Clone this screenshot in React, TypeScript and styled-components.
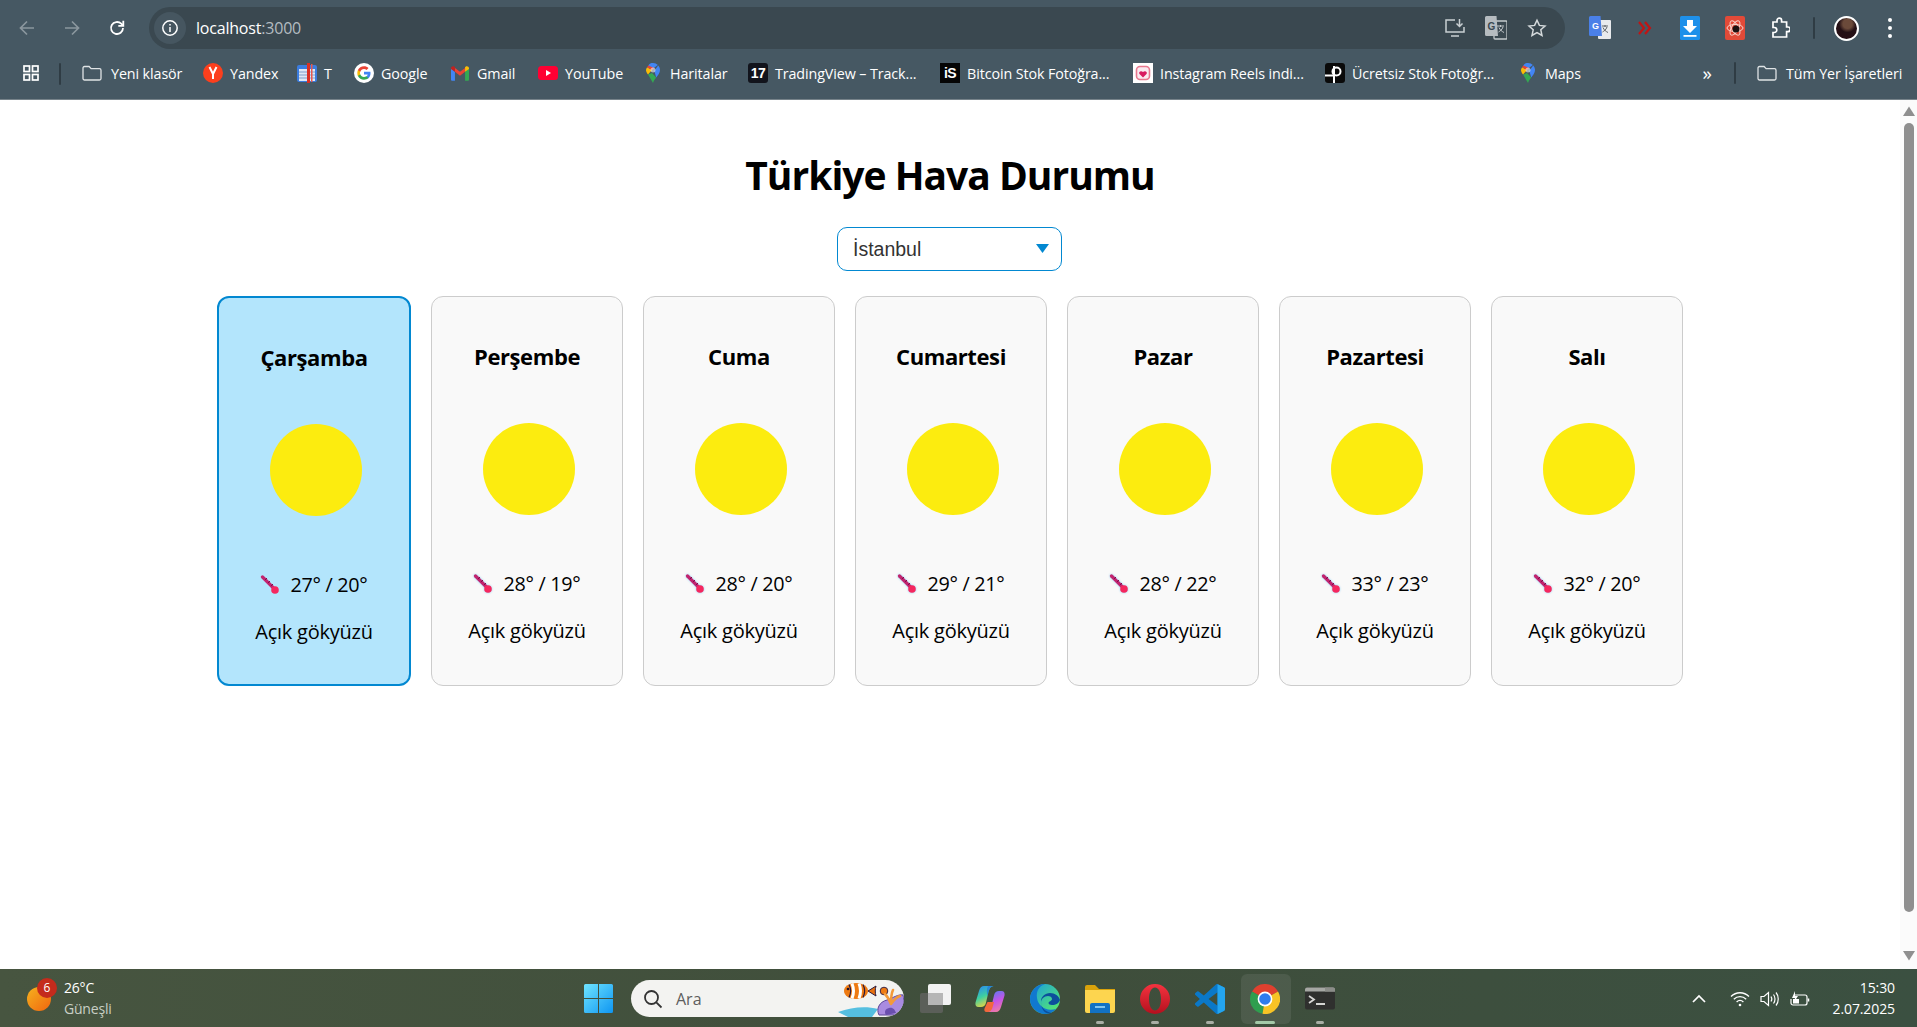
import React from "react";
import styled, { createGlobalStyle } from "styled-components";

const Global = createGlobalStyle`
  html, body { margin: 0; padding: 0; height: 100%; overflow: hidden; }
  * { box-sizing: border-box; }
  body { font-family: "Open Sans", "Noto Sans", sans-serif; background: #fff; }
  svg { flex: none; }
`;

const Screen = styled.div`
  height: 100vh;
  display: flex;
  flex-direction: column;
`;

/* ---------- browser chrome ---------- */
const BrowserChrome = styled.header`
  height: 100px;
  flex: none;
  background: #465863;
  border-bottom: 1px solid #77838a;
  color: #fff;
`;
const Toolbar = styled.div`
  height: 56px;
  padding: 7px 5px 0 4px;
  display: flex;
  align-items: flex-start;
`;
const NavButton = styled.div<{ $w?: number }>`
  width: ${(p) => p.$w ?? 45}px;
  height: 42px;
  flex: none;
  display: flex;
  align-items: center;
  justify-content: center;
`;
const Omnibox = styled.div`
  flex: 1;
  height: 42px;
  margin: 0 12px 0 10px;
  background: #3a4850;
  border-radius: 21px;
  display: flex;
  align-items: center;
  padding: 0 8px 0 5px;
`;
const InfoChip = styled.div`
  width: 32px;
  height: 32px;
  border-radius: 50%;
  background: #465660;
  display: flex;
  align-items: center;
  justify-content: center;
`;
const Url = styled.div`
  margin-left: 10px;
  font-size: 16px;
  letter-spacing: -0.2px;
  color: #fff;
  flex: 1;
  span { color: #b4bcc1; }
`;
const OmniAction = styled.div`
  width: 41px;
  height: 32px;
  display: flex;
  align-items: center;
  justify-content: center;
`;
const Divider = styled.div<{ $ml: number; $mr?: number; $mt?: number }>`
  width: 2px;
  height: 22px;
  flex: none;
  margin: ${(p) => p.$mt ?? 0}px ${(p) => p.$mr ?? 0}px 0 ${(p) => p.$ml}px;
  background: #2f3c44;
  border-radius: 1px;
`;
const AvatarRing = styled.div`
  width: 25px;
  height: 25px;
  border-radius: 50%;
  border: 2px solid #fff;
  background: radial-gradient(circle at 55% 28%, #6b4a3a 0 24%, #241015 45%, #2a0d14 100%);
`;
const BookmarkBar = styled.nav`
  height: 43px;
  display: flex;
  align-items: flex-start;
  padding: 7px 16px 0 23px;
`;
const BarSlot = styled.div`
  height: 20px;
  display: flex;
  align-items: center;
`;
const BookmarkItem = styled.div<{ $first?: boolean }>`
  height: 20px;
  display: flex;
  align-items: center;
  gap: 9px;
  margin-left: ${(p) => (p.$first ? 21 : 23)}px;
  flex: none;
`;
const BookmarkIcon = styled.div<{ $w?: number }>`
  width: ${(p) => p.$w ?? 16}px;
  height: 16px;
  display: flex;
  align-items: center;
  justify-content: center;
  flex: none;
`;
const BookmarkLabel = styled.span<{ $w: number }>`
  width: ${(p) => p.$w}px;
  white-space: nowrap;
  font-size: 14.3px;
  letter-spacing: -0.1px;
  color: #fff;
`;
const BadgeSquare = styled.div<{ $bg: string; $r: number }>`
  width: 20px;
  height: 20px;
  flex: none;
  background: ${(p) => p.$bg};
  border-radius: ${(p) => p.$r}px;
  color: #fff;
  font-family: "Liberation Sans", sans-serif;
  font-weight: 700;
  font-size: 14px;
  line-height: 20px;
  text-align: center;
  letter-spacing: -0.5px;
`;
const BarEnd = styled.div`
  margin-left: auto;
  display: flex;
  align-items: center;
  height: 20px;
`;
const Chevrons = styled.span`
  font-size: 19px;
  line-height: 20px;
  color: #fff;
  margin-right: 22px;
`;
const AllBookmarks = styled.div`
  margin-left: 21px;
  display: flex;
  align-items: center;
  gap: 9px;
`;

/* ---------- page ---------- */
const Viewport = styled.div`
  flex: 1;
  min-height: 0;
  display: flex;
`;
const Page = styled.main`
  flex: 1;
  padding-top: 50px;
  display: flex;
  flex-direction: column;
  align-items: center;
`;
const Title = styled.h1`
  margin: 0;
  font-size: 39px;
  line-height: 50px;
  font-weight: 700;
  color: #000;
  letter-spacing: -1px;
`;
const SelectWrap = styled.div`
  position: relative;
  width: 225px;
  height: 44px;
  margin: 27px 1px 0 0;
`;
const CitySelect = styled.select`
  appearance: none;
  width: 100%;
  height: 100%;
  border: 1px solid #0288d1;
  border-radius: 10px;
  background: #fff;
  padding: 0 15px;
  font-family: "Liberation Sans", Arial, sans-serif;
  font-size: 19.5px;
  color: #333;
  outline: none;
`;
const SelectArrow = styled.svg`
  position: absolute;
  right: 13px;
  top: 17px;
  width: 13px;
  height: 9px;
`;
const Cards = styled.section`
  margin-top: 25px;
  display: flex;
  align-items: flex-start;
  gap: 20px;
`;
const Card = styled.article<{ $active?: boolean }>`
  width: ${(p) => (p.$active ? 194 : 192)}px;
  height: 390px;
  border-radius: 12px;
  border: ${(p) => (p.$active ? "2px solid #0288d1" : "1px solid #ccc")};
  background: ${(p) => (p.$active ? "#b3e5fc" : "#f9f9f9")};
  padding-top: 43px;
  display: flex;
  flex-direction: column;
  align-items: center;
  color: #000;
`;
const DayName = styled.h3`
  margin: 0;
  font-size: 22px;
  line-height: 32px;
  font-weight: 700;
  letter-spacing: -0.4px;
`;
const Sun = styled.div`
  width: 92px;
  height: 92px;
  margin: 51px 0 0 4px;
  border-radius: 50%;
  background: #fcec0f;
`;
const TempRow = styled.div`
  margin-top: 56px;
  display: flex;
  align-items: center;
  gap: 10px;
  font-size: 19.8px;
  line-height: 26px;
  letter-spacing: -0.3px;
`;
const Thermo = styled.svg<{ $halo?: boolean }>`
  width: 20px;
  height: 20px;
  flex: none;
  filter: ${(p) => (p.$halo ? "drop-shadow(0 0 1px #8fd0f5)" : "none")};
`;
const Description = styled.p`
  margin: 21px 0 0;
  font-size: 20px;
  line-height: 26px;
  letter-spacing: -0.25px;
`;
const Scrollbar = styled.div`
  width: 17px;
  flex: none;
  background: #fbfbfb;
  display: flex;
  flex-direction: column;
  align-items: center;
  padding: 6px 0 8px;
`;
const ScrollThumb = styled.div`
  width: 10px;
  flex: 1;
  margin: 7px 0 39px;
  background: #8f8f8f;
  border-radius: 5px;
`;
const ScrollArrow = styled.svg`
  width: 12px;
  height: 10px;
  flex: none;
`;

/* ---------- taskbar ---------- */
const Taskbar = styled.footer`
  height: 58px;
  flex: none;
  padding-top: 1px;
  background: linear-gradient(90deg, #475540 0%, #3f4e3b 55%, #3b5041 100%);
  display: grid;
  grid-template-columns: 573px auto 1fr;
  align-items: center;
`;
const WeatherWidget = styled.div`
  display: flex;
  align-items: center;
  padding-left: 27px;
`;
const WeatherIcon = styled.div`
  position: relative;
  width: 24px;
  height: 24px;
  border-radius: 50%;
  background: linear-gradient(135deg, #f6b21e, #f0650f);
`;
const CountBadge = styled.span`
  position: absolute;
  top: -9px;
  left: 10px;
  width: 20px;
  height: 20px;
  border-radius: 50%;
  background: #c42b1c;
  color: #fff;
  font-size: 12px;
  line-height: 20px;
  text-align: center;
`;
const WeatherText = styled.div`
  margin-left: 13px;
  font-size: 14px;
  line-height: 20.5px;
  letter-spacing: -0.2px;
  color: #fff;
  small { display: block; font-size: 14px; color: #c9cfc5; }
`;
const CenterGroup = styled.div`
  display: flex;
  align-items: center;
`;
const SearchBox = styled.div`
  width: 273px;
  height: 37px;
  margin: 0 3.5px 0 8px;
  border-radius: 19px;
  background: #f3f3f1;
  display: flex;
  align-items: center;
  padding-left: 12px;
  overflow: hidden;
  color: #5e5e5e;
  font-size: 16px;
  span { margin-left: 13px; flex: 1; }
`;
const TaskButton = styled.div<{ $w?: number; $active?: boolean }>`
  position: relative;
  width: ${(p) => p.$w ?? 55}px;
  height: 50px;
  display: flex;
  align-items: center;
  justify-content: center;
  &::before {
    content: "";
    display: ${(p) => (p.$active ? "block" : "none")};
    position: absolute;
    inset: 0 2px 0 3px;
    border-radius: 6px;
    background: rgba(255, 255, 255, 0.08);
  }
  svg { position: relative; }
`;
const RunDot = styled.i<{ $active?: boolean }>`
  position: absolute;
  bottom: 0;
  left: 50%;
  transform: translateX(-50%);
  width: ${(p) => (p.$active ? 20 : 8)}px;
  height: 3px;
  border-radius: 2px;
  background: ${(p) => (p.$active ? "#a4c9a8" : "#a9aea5")};
`;
const Tray = styled.div`
  display: flex;
  align-items: center;
  justify-content: flex-end;
  padding-right: 22px;
  color: #fff;
`;
const TrayIcon = styled.div`
  width: 30px;
  height: 24px;
  display: flex;
  align-items: center;
  justify-content: center;
`;
const TrayGap = styled.div`
  width: 11px;
`;
const Clock = styled.div`
  margin-left: 18px;
  text-align: right;
  font-size: 14px;
  line-height: 20.5px;
  letter-spacing: -0.1px;
`;

/* ---------- icons ---------- */
const FolderIcon = () => (
  <svg width="20" height="16" viewBox="0 0 20 16" fill="none" stroke="#dfe3e5" strokeWidth="1.3">
    <path d="M1 3a1.5 1.5 0 0 1 1.5-1.5h4.6l2 2.2h8.4A1.5 1.5 0 0 1 19 5.200v8.300a1.500 1.500 0 0 1-1.500 1.500h-15A1.500 1.500 0 0 1 1 13.500z" />
  </svg>
);
const GoogleIcon = () => (
  <svg width="20" height="20" viewBox="0 0 48 48">
    <circle cx="24" cy="24" r="24" fill="#fff" />
    <path fill="#4285F4" d="M39.600 24.400c0-1.200-.1-2.300-.3-3.400H24v6.400h8.800c-.4 2-1.500 3.800-3.300 5v4.100h5.300c3.100-2.900 4.800-7.100 4.800-12.100z" />
    <path fill="#34A853" d="M24 40c4.400 0 8.100-1.500 10.800-3.900l-5.300-4.100c-1.500 1-3.300 1.600-5.500 1.600-4.200 0-7.800-2.900-9.100-6.700H9.400v4.200C12 36.400 17.600 40 24 40z" />
    <path fill="#FBBC05" d="M14.900 26.900c-.3-1-.5-2-.5-3s.2-2.100.5-3v-4.200H9.400C8.500 18.800 8 21.300 8 24s.5 5.200 1.400 7.100z" />
    <path fill="#EA4335" d="M24 14.300c2.400 0 4.500.8 6.200 2.400l4.600-4.600C32 9.500 28.400 8 24 8 17.600 8 12 11.600 9.400 16.900l5.500 4.200c1.300-3.900 4.900-6.800 9.100-6.800z" />
  </svg>
);
const GmailIcon = () => (
  <svg width="18" height="15" viewBox="0 0 16 13">
    <path fill="#4285F4" d="M0 2v10a1 1 0 0 0 1 1h2.500V5z" />
    <path fill="#34A853" d="M16 2v10a1 1 0 0 1-1 1h-2.500V5z" />
    <path fill="#EA4335" d="M3.500 5V1.500L8 5l4.500-3.500V5L8 8.400z" />
    <path fill="#C5221F" d="M0 2c0-1.600 1.800-2.500 3-1.600l.5.400V5L0 2.500z" />
    <path fill="#FBBC05" d="M16 2c0-1.600-1.800-2.500-3-1.600l-.5.400V5L16 2.500z" />
  </svg>
);
const MapsPin = () => (
  <svg width="14" height="24" viewBox="0 0 14 20">
    <path fill="#34A853" d="M2 11.500 7 20c.6-2 2-4 3.200-5.500L6 10z" />
    <path fill="#FBBC05" d="M1.100 4.200C.4 5.200 0 6 0 7.100c0 1.800.9 3 2 4.400L6 7z" />
    <path fill="#4285F4" d="M7 0C5 0 3.500.6 2.300 2.500L6 6.500 11.800 2C10.500.7 9 0 7 0z" />
    <path fill="#EA4335" d="M2.300 2.500 1.100 4.200 6 7 8 5z" />
    <path fill="#4285F4" d="M12.200 2.500 8.300 7.800 10.200 14.500C12 12 14 10 14 7c0-1.800-.7-3.300-1.800-4.500z" />
    <circle cx="7" cy="7" r="2.500" fill="#fff" opacity=".55" />
  </svg>
);
const SheetIcon = () => (
  <svg width="20" height="20" viewBox="0 0 20 20">
    <rect x="0" y="2" width="20" height="17" rx="2" fill="#3b7de0" />
    <rect x="2" y="6" width="16" height="12" fill="#dfe8f5" />
    <path d="M2 9h16M2 12h16M2 15h16" stroke="#7f9ecb" strokeWidth="1" />
    <rect x="10" y="0" width="3" height="20" fill="#d93025" />
    <rect x="14" y="1" width="1.500" height="18" fill="#e8584d" />
  </svg>
);
const InstaIcon = () => (
  <svg width="20" height="20" viewBox="0 0 20 20">
    <rect width="20" height="20" fill="#fff" />
    <rect x="3.500" y="3.500" width="13" height="13" rx="3.500" fill="#fbeaf0" stroke="#e9788f" strokeWidth="1.600" />
    <path d="M10 14.500 6.500 11c-1.500-2 1.500-4 3.500-2 2-2 5 0 3.500 2z" fill="#d81b60" />
  </svg>
);
const PexelsIcon = () => (
  <svg width="20" height="20" viewBox="0 0 20 20">
    <rect width="20" height="20" rx="3" fill="#0a0a0a" />
    <circle cx="11.500" cy="8.500" r="4" fill="none" stroke="#fff" strokeWidth="2" />
    <path d="M9 3v17M0 12.500h9" stroke="#fff" strokeWidth="2" />
  </svg>
);
const TranslateExt = () => (
  <svg width="22" height="26" viewBox="0 0 22 26">
    <rect x="9" y="5" width="13" height="19" rx="1" fill="#e8eaed" />
    <path d="M13 11h6M16 10v2M18 12c-1 3-3 4-4.500 5M14 12.500c1 2.500 3 4 5 5" stroke="#5f6368" strokeWidth="1" fill="none" />
    <path d="M1.500 1h10L13 21H1.500A1.500 1.500 0 0 1 0 19.500v-17A1.500 1.500 0 0 1 1.500 1z" fill="#4a80e8" />
    <text x="6.500" y="14" textAnchor="middle" fontFamily="Liberation Sans" fontWeight="700" fontSize="9" fill="#fff">G</text>
  </svg>
);
const OmniTranslate = () => (
  <svg width="22" height="26" viewBox="0 0 22 26">
    <rect x="9" y="6" width="13" height="18" rx="1" fill="none" stroke="#c4cacd" strokeWidth="1.300" />
    <path d="M12 11h7M15.500 10v2M18 12c-1 3-3 4-4.500 5M14 12.500c1 2.500 3 4 5 5" stroke="#c4cacd" strokeWidth="1" fill="none" />
    <path d="M1.500 1h10L13 21H1.500A1.500 1.500 0 0 1 0 19.500v-17A1.500 1.500 0 0 1 1.500 1z" fill="#b6bcc0" />
    <text x="6.500" y="14.500" textAnchor="middle" fontFamily="Liberation Sans" fontWeight="700" fontSize="10" fill="#3a4850">G</text>
  </svg>
);
const FishArt = () => (
  <svg width="66" height="37" viewBox="0 0 66 37">
    <path d="M0 32c14-5 28-6 40-3l-6 8H10z" fill="#55bfe0" />
    <ellipse cx="18" cy="11" rx="12" ry="8" fill="#ee7a12" />
    <path d="M14 3.500c2 5 2 10 0 15M21 3.500c2 5 2 10 0 15" stroke="#fff" strokeWidth="3" fill="none" />
    <path d="M11 4.500c2 4 2 9 0 13M25 4.500c2 4 2 9 0 13" stroke="#2b1a3d" strokeWidth="1.200" fill="none" />
    <path d="M30 11l8-5c-1 3-1 7 0 10z" fill="#e8700e" stroke="#2b1a3d" strokeWidth="1" />
    <circle cx="10" cy="9" r="1.300" fill="#1b1030" />
    <circle cx="46" cy="11" r="3.800" fill="#ee7a12" stroke="#3a2748" strokeWidth="1" />
    <path d="M41 35c-3-6 0-13 8-15 6-2 11-6 16-5 2 7 0 15-5 20z" fill="#a98be0" stroke="#5b4596" strokeWidth="1" />
    <path d="M48 35c-2-3-1-6 3-7s6 2 7 5z" fill="#6a4fae" />
    <path d="M53 24c-2-5-4-8-6-10M53 24c0-6 0-10 2-14M53 24c3-4 5-7 9-8" stroke="#f39a3a" strokeWidth="2.600" fill="none" strokeLinecap="round" />
  </svg>
);
const CopilotIcon = () => (
  <svg width="30" height="28" viewBox="0 0 30 28">
    <defs>
      <linearGradient id="cpA" x1="0.2" y1="0" x2="0.6" y2="1">
        <stop offset="0" stopColor="#2a8cf0" />
        <stop offset=".5" stopColor="#3ed0a0" />
        <stop offset="1" stopColor="#f8d63a" />
      </linearGradient>
      <linearGradient id="cpB" x1="0.3" y1="0" x2="0.7" y2="1">
        <stop offset="0" stopColor="#5a7af0" />
        <stop offset=".5" stopColor="#c455e6" />
        <stop offset="1" stopColor="#f37ea0" />
      </linearGradient>
    </defs>
    <path fill="url(#cpA)" d="M9 1h9.500c-3 .6-4.300 3-5 6l-2.600 11c-.6 2.500-2.400 4-4.900 4H3.500C1 22 0 20 .5 17.500L4 6C5 2.800 6.500 1 9 1z" />
    <path fill="url(#cpB)" d="M21 27h-9.500c3-.6 4.300-3 5-6l2.600-11C19.700 7.500 21.500 6 24 6h2.500c2.500 0 3.500 2 3 4.500L26 22c-1 3.200-2.500 5-5 5z" />
    <path fill="#f2683c" d="M12.500 17h6.500l-1.500 5.500c-.6 2.700-2.500 4.500-5 4.500h-1c-2 0-2.500-1.600-2-3.500z" />
    <path fill="#1f6fe0" d="M13 1h5.500c-3 .6-4.300 3-5 6l-1 4c-1-3.500-1-7 .5-10z" opacity=".65" />
  </svg>
);
const EdgeIcon = () => (
  <svg width="30" height="30" viewBox="0 0 30 30">
    <defs>
      <linearGradient id="edA" x1="0.2" y1="0" x2="0.9" y2="0.7">
        <stop offset="0" stopColor="#1fa3d6" />
        <stop offset="1" stopColor="#4fe07a" />
      </linearGradient>
    </defs>
    <circle cx="15" cy="15" r="15" fill="url(#edA)" />
    <path fill="#1178cf" d="M0 15C0 7 7 0 15 0 9 2 6 7 7 14c1 8 9 14 19 11a15 15 0 0 1-11 5C7 30 0 23 0 15z" />
    <path fill="#0c4f9c" d="M11 17c0-4 4-8 9-8 5 0 9 3 10 7-1 3-4 5-8 5-2 0-3.500-1-3.500-2 0-1.500 3.500-2 3.500-4s-2-3-4-3c-4 0-7 3-7 7 0 5 5 9 11 10-7 2-11-3-11-12z" />
  </svg>
);
const OperaIcon = () => (
  <svg width="30" height="30" viewBox="0 0 30 30">
    <defs>
      <linearGradient id="opA" x1="0" y1="0" x2="0" y2="1">
        <stop offset="0" stopColor="#f5333f" />
        <stop offset="1" stopColor="#b4101e" />
      </linearGradient>
    </defs>
    <path fill="url(#opA)" fillRule="evenodd" d="M15 0a15 15 0 1 1 0 30 15 15 0 0 1 0-30zm0 3.500c-3.800 0-6 5-6 11.500s2.200 11.500 6 11.500 6-5 6-11.500-2.200-11.500-6-11.500z" />
  </svg>
);
const VsCodeIcon = () => (
  <svg width="30" height="30" viewBox="0 0 24 24">
    <path fill="#0a78c8" d="M23.150 2.587 18.210.21a1.494 1.494 0 0 0-1.705.29l-9.460 8.630-4.120-3.128a.999.999 0 0 0-1.276.057L.327 7.261A1 1 0 0 0 .326 8.740L3.899 12 .326 15.260a1 1 0 0 0 .001 1.479L1.650 17.940a.999.999 0 0 0 1.276.057l4.120-3.128 9.460 8.630a1.492 1.492 0 0 0 1.704.29l4.942-2.377A1.500 1.500 0 0 0 24 20.060V3.939a1.500 1.500 0 0 0-.85-1.352zm-5.146 14.861L10.826 12l7.178-5.448v10.896z" />
    <path fill="#23a5ef" d="M18.004 0v24a1.500 1.500 0 0 0 .2-.06l4.946-2.377A1.500 1.500 0 0 0 24 20.210V3.790a1.500 1.500 0 0 0-.85-1.203L18.210.21A1.500 1.500 0 0 0 18.004.04z" />
  </svg>
);
const ChromeIcon = () => (
  <svg width="30" height="30" viewBox="0 0 30 30">
    <path fill="#e0402f" d="M15 15 2 7.500A15 15 0 0 1 28 7.500z" />
    <path fill="#2f9e4f" d="M15 15 2 7.500A15 15 0 0 0 12.500 29.800z" />
    <path fill="#f7c325" d="M15 15 28 7.500A15 15 0 0 1 12.500 29.800z" />
    <circle cx="15" cy="15" r="7.400" fill="#fff" />
    <circle cx="15" cy="15" r="5.800" fill="#2f7cee" />
  </svg>
);
const TerminalIcon = () => (
  <svg width="30" height="23" viewBox="0 0 30 23">
    <rect width="30" height="22" y="0.500" rx="2" fill="#2f302e" />
    <path d="M2 .5h26a2 2 0 0 1 2 2V4.500H0V2.500a2 2 0 0 1 2-2z" fill="#a6a8a4" />
    <path d="M20 .5h8a2 2 0 0 1 2 2V4.500H20z" fill="#8b8d89" />
    <path d="M4 9l5 3.500L4 16" stroke="#d7d7d5" strokeWidth="1.800" fill="none" />
    <path d="M11 17h9" stroke="#e8e8e6" strokeWidth="1.800" />
  </svg>
);

const days = [
  { name: "Çarşamba", temp: "27° / 20°", active: true },
  { name: "Perşembe", temp: "28° / 19°" },
  { name: "Cuma", temp: "28° / 20°" },
  { name: "Cumartesi", temp: "29° / 21°" },
  { name: "Pazar", temp: "28° / 22°" },
  { name: "Pazartesi", temp: "33° / 23°" },
  { name: "Salı", temp: "32° / 20°" },
];

const bookmarks: { label: string; w: number; icon: React.ReactNode; iw?: number }[] = [
  { label: "Yeni klasör", w: 71, iw: 20, icon: <FolderIcon /> },
  { label: "Yandex", w: 46, icon: <svg width="20" height="20" viewBox="0 0 20 20"><circle cx="10" cy="10" r="10" fill="#fc3f1d" /><path d="M6.500 4l3.500 7v5M13.500 4 10 11" stroke="#fff" strokeWidth="2" fill="none" /></svg> },
  { label: "T", w: 9, icon: <SheetIcon /> },
  { label: "Google", w: 48, icon: <GoogleIcon /> },
  { label: "Gmail", w: 40, icon: <GmailIcon /> },
  { label: "YouTube", w: 57, icon: <svg width="20" height="14" viewBox="0 0 20 14"><rect width="20" height="14" rx="3.500" fill="#ff0033" /><path d="M8 4l5 3-5 3z" fill="#fff" /></svg> },
  { label: "Haritalar", w: 57, icon: <MapsPin /> },
  { label: "TradingView – Track...", w: 144, icon: <BadgeSquare $bg="#12141c" $r={3}>17</BadgeSquare> },
  { label: "Bitcoin Stok Fotoğra...", w: 145, icon: <BadgeSquare $bg="#050505" $r={0}>iS</BadgeSquare> },
  { label: "Instagram Reels indi...", w: 144, icon: <InstaIcon /> },
  { label: "Ücretsiz Stok Fotoğr...", w: 145, icon: <PexelsIcon /> },
  { label: "Maps", w: 37, icon: <MapsPin /> },
];

export default function App() {
  return (
    <Screen>
      <Global />
      <BrowserChrome>
        <Toolbar>
          <NavButton>
            <svg width="18" height="18" viewBox="0 0 18 18" fill="none" stroke="#8b979e" strokeWidth="1.700"><path d="M16 9H2.500M9 2.500 2.500 9 9 15.500" /></svg>
          </NavButton>
          <NavButton>
            <svg width="18" height="18" viewBox="0 0 18 18" fill="none" stroke="#8b979e" strokeWidth="1.700"><path d="M2 9h13.500M9 2.500 15.500 9 9 15.500" /></svg>
          </NavButton>
          <NavButton>
            <svg width="18" height="18" viewBox="0 0 18 18" fill="none" stroke="#fff" strokeWidth="1.800"><path d="M15 9a6 6 0 1 1-1.800-4.300L15 6.500" /><path d="M15.300 1.800v5h-5" /></svg>
          </NavButton>
          <Omnibox>
            <InfoChip>
              <svg width="18" height="18" viewBox="0 0 18 18" fill="none" stroke="#fff" strokeWidth="1.500"><circle cx="9" cy="9" r="7.200" /><path d="M9 8v5M9 5v1.600" /></svg>
            </InfoChip>
            <Url>localhost<span>:3000</span></Url>
            <OmniAction>
              <svg width="22" height="20" viewBox="0 0 22 20" fill="none" stroke="#c9cfd2" strokeWidth="1.500"><path d="M11 2H2v12h18V9M7 18h8M15.500 1v7M12.500 5.500l3 3 3-3" /></svg>
            </OmniAction>
            <OmniAction><OmniTranslate /></OmniAction>
            <OmniAction>
              <svg width="20" height="20" viewBox="0 0 20 20" fill="none" stroke="#d5dadc" strokeWidth="1.500"><path d="M10 2.200l2.400 5.200 5.600.6-4.200 3.800 1.200 5.600-5-2.900-5 2.900 1.200-5.600L2 8l5.600-.6z" /></svg>
            </OmniAction>
          </Omnibox>
          <NavButton><TranslateExt /></NavButton>
          <NavButton>
            <svg width="16" height="16" viewBox="0 0 16 16" fill="none" stroke="#c01414" strokeWidth="2.200"><path d="M2 2l5 6-5 6M8 2l5 6-5 6" /></svg>
          </NavButton>
          <NavButton>
            <svg width="20" height="24" viewBox="0 0 20 24"><rect width="20" height="24" rx="1.500" fill="#1e90ea" /><path d="M7 4h6v6h4l-7 7-7-7h4z" fill="#fff" /><rect x="3.500" y="19" width="13" height="1.800" fill="#fff" /></svg>
          </NavButton>
          <NavButton>
            <svg width="20" height="24" viewBox="0 0 20 24"><rect width="20" height="24" rx="2" fill="#e24a38" /><g fill="none" stroke="#f9d4cd" strokeWidth="1"><ellipse cx="10" cy="12" rx="8" ry="3.500" /><ellipse cx="10" cy="12" rx="8" ry="3.500" transform="rotate(60 10 12)" /><ellipse cx="10" cy="12" rx="8" ry="3.500" transform="rotate(120 10 12)" /></g><circle cx="11" cy="13" r="3.500" fill="#1c1111" /></svg>
          </NavButton>
          <NavButton>
            <svg width="20" height="22" viewBox="0 0 20 22" fill="none" stroke="#fff" strokeWidth="1.700"><path d="M3 5h4V3.500a2.300 2.300 0 0 1 4.600 0V5h5v5h1.300a2.300 2.300 0 0 1 0 4.600H16.600V20H3v-4.500h1.300a2.500 2.500 0 0 0 0-5H3z" /></svg>
          </NavButton>
          <Divider $ml={11} $mr={9} $mt={10} />
          <NavButton $w={44}><AvatarRing /></NavButton>
          <NavButton $w={44}>
            <svg width="6" height="22" viewBox="0 0 6 22" fill="#fff"><circle cx="3" cy="3" r="2" /><circle cx="3" cy="11" r="2" /><circle cx="3" cy="19" r="2" /></svg>
          </NavButton>
        </Toolbar>
        <BookmarkBar>
          <BarSlot>
            <svg width="16" height="16" viewBox="0 0 16 16" fill="none" stroke="#fff" strokeWidth="1.700"><rect x="1" y="1" width="5.500" height="5.500" /><rect x="9.500" y="1" width="5.500" height="5.500" /><rect x="1" y="9.500" width="5.500" height="5.500" /><rect x="9.500" y="9.500" width="5.500" height="5.500" /></svg>
          </BarSlot>
          <Divider $ml={20} />
          {bookmarks.map((b, i) => (
            <BookmarkItem key={b.label} $first={i === 0}>
              <BookmarkIcon $w={b.iw}>{b.icon}</BookmarkIcon>
              <BookmarkLabel $w={b.w}>{b.label}</BookmarkLabel>
            </BookmarkItem>
          ))}
          <BarEnd>
            <Chevrons>»</Chevrons>
            <Divider $ml={0} />
            <AllBookmarks>
              <BookmarkIcon $w={20}><FolderIcon /></BookmarkIcon>
              <BookmarkLabel $w={115}>Tüm Yer İşaretleri</BookmarkLabel>
            </AllBookmarks>
          </BarEnd>
        </BookmarkBar>
      </BrowserChrome>

      <Viewport>
        <Page>
          <Title>Türkiye Hava Durumu</Title>
          <SelectWrap>
            <CitySelect defaultValue="İstanbul">
              <option>İstanbul</option>
              <option>Ankara</option>
              <option>İzmir</option>
            </CitySelect>
            <SelectArrow viewBox="0 0 13 9"><path d="M0 0h13L6.500 9z" fill="#0288d1" /></SelectArrow>
          </SelectWrap>
          <Cards>
            {days.map((d) => (
              <Card key={d.name} $active={d.active}>
                <DayName>{d.name}</DayName>
                <Sun />
                <TempRow>
                  <Thermo $halo={!d.active} viewBox="0 0 20 20">
                    <path d="M2.500 2 13 12.500" stroke="#c2246f" strokeWidth="3.200" strokeLinecap="round" />
                    <path d="M5 5l2-2M8 8l2-2M11 11l2-2" stroke="#7a1250" strokeWidth="1" />
                    <circle cx="15" cy="15" r="3.800" fill="#f5275f" />
                  </Thermo>
                  {d.temp}
                </TempRow>
                <Description>Açık gökyüzü</Description>
              </Card>
            ))}
          </Cards>
        </Page>
        <Scrollbar>
          <ScrollArrow viewBox="0 0 12 10"><path d="M6 .5 12 10H0z" fill="#8f8f8f" /></ScrollArrow>
          <ScrollThumb />
          <ScrollArrow viewBox="0 0 12 10"><path d="M6 9.500 0 0h12z" fill="#8f8f8f" /></ScrollArrow>
        </Scrollbar>
      </Viewport>

      <Taskbar>
        <WeatherWidget>
          <WeatherIcon><CountBadge>6</CountBadge></WeatherIcon>
          <WeatherText>26°C<small>Güneşli</small></WeatherText>
        </WeatherWidget>
        <CenterGroup>
          <TaskButton $w={50}>
            <svg width="29" height="29" viewBox="0 0 29 29">
              <defs><linearGradient id="win" x1="0" y1="0" x2="1" y2="1"><stop offset="0" stopColor="#6fe4ff" /><stop offset="1" stopColor="#0f96f2" /></linearGradient></defs>
              <path fill="url(#win)" d="M0 1.500A1.500 1.500 0 0 1 1.500 0H14v14H0zM15 0h12.500A1.500 1.500 0 0 1 29 1.500V14H15zM0 15h14v14H1.500A1.500 1.500 0 0 1 0 27.500zM15 15h14v12.500a1.500 1.500 0 0 1-1.500 1.500H15z" />
            </svg>
          </TaskButton>
          <SearchBox>
            <svg width="20" height="20" viewBox="0 0 20 20" fill="none" stroke="#333" strokeWidth="1.800"><circle cx="8.500" cy="8.500" r="6.500" /><path d="M13.300 13.300 18.500 18.500" /></svg>
            <span>Ara</span>
            <FishArt />
          </SearchBox>
          <TaskButton>
            <svg width="31" height="29" viewBox="0 0 31 29"><rect x="0" y="9" width="23" height="20" rx="2" fill="#5b5f59" /><rect x="8" y="0" width="23" height="21" rx="2" fill="#f2f2f2" /><rect x="8" y="9" width="15" height="12" fill="#b6b6b6" /></svg>
          </TaskButton>
          <TaskButton><CopilotIcon /></TaskButton>
          <TaskButton><EdgeIcon /></TaskButton>
          <TaskButton>
            <svg width="30" height="28" viewBox="0 0 30 28">
              <path fill="#d9a20b" d="M0 2a2 2 0 0 1 2-2h8l4 4h16v4H0z" />
              <path fill="#fdd54f" d="M0 5h30v21a2 2 0 0 1-2 2H2a2 2 0 0 1-2-2z" />
              <path fill="#1272c4" d="M5 28v-8a2 2 0 0 1 2-2h16a2 2 0 0 1 2 2v8z" />
              <rect x="10" y="21" width="10" height="2" fill="#7fc4ef" />
            </svg>
            <RunDot />
          </TaskButton>
          <TaskButton><OperaIcon /><RunDot /></TaskButton>
          <TaskButton><VsCodeIcon /><RunDot /></TaskButton>
          <TaskButton $active><ChromeIcon /><RunDot $active /></TaskButton>
          <TaskButton><TerminalIcon /><RunDot /></TaskButton>
        </CenterGroup>
        <Tray>
          <TrayIcon>
            <svg width="14" height="9" viewBox="0 0 14 9" fill="none" stroke="#fff" strokeWidth="1.700"><path d="M1 8l6-6 6 6" /></svg>
          </TrayIcon>
          <TrayGap />
          <TrayIcon>
            <svg width="20" height="16" viewBox="0 0 20 16" fill="none" stroke="#fff" strokeWidth="1.300"><path d="M1 5.500c5-5 13-5 18 0M3.800 8.300c3.500-3.500 8.900-3.500 12.400 0M6.600 11c2-1.900 4.800-1.900 6.800 0" /><circle cx="10" cy="14" r="1.300" fill="#fff" stroke="none" /></svg>
          </TrayIcon>
          <TrayIcon>
            <svg width="20" height="18" viewBox="0 0 20 18" fill="none" stroke="#fff" strokeWidth="1.200"><path d="M1 6.500h3L8.500 2.500v13L4 11.500H1z" /><path d="M11 6.500c1 1.500 1 3.500 0 5M13.500 4.500c2 2.500 2 6.500 0 9M16 2.500c3 3.500 3 9.500 0 13" /></svg>
          </TrayIcon>
          <TrayIcon>
            <svg width="20" height="18" viewBox="0 0 20 18" fill="none" stroke="#fff" strokeWidth="1.200"><path d="M5 5h10a2 2 0 0 1 2 2v6a2 2 0 0 1-2 2H3a2 2 0 0 1-2-2V9" /><path d="M18.500 8.500v3" strokeWidth="1.500" /><path d="M5 1 2 8h3l-1 4 4-6H5z" fill="#fff" stroke="none" /><rect x="3" y="9" width="6" height="4.500" fill="#fff" stroke="none" /></svg>
          </TrayIcon>
          <Clock>15:30<br />2.07.2025</Clock>
        </Tray>
      </Taskbar>
    </Screen>
  );
}
